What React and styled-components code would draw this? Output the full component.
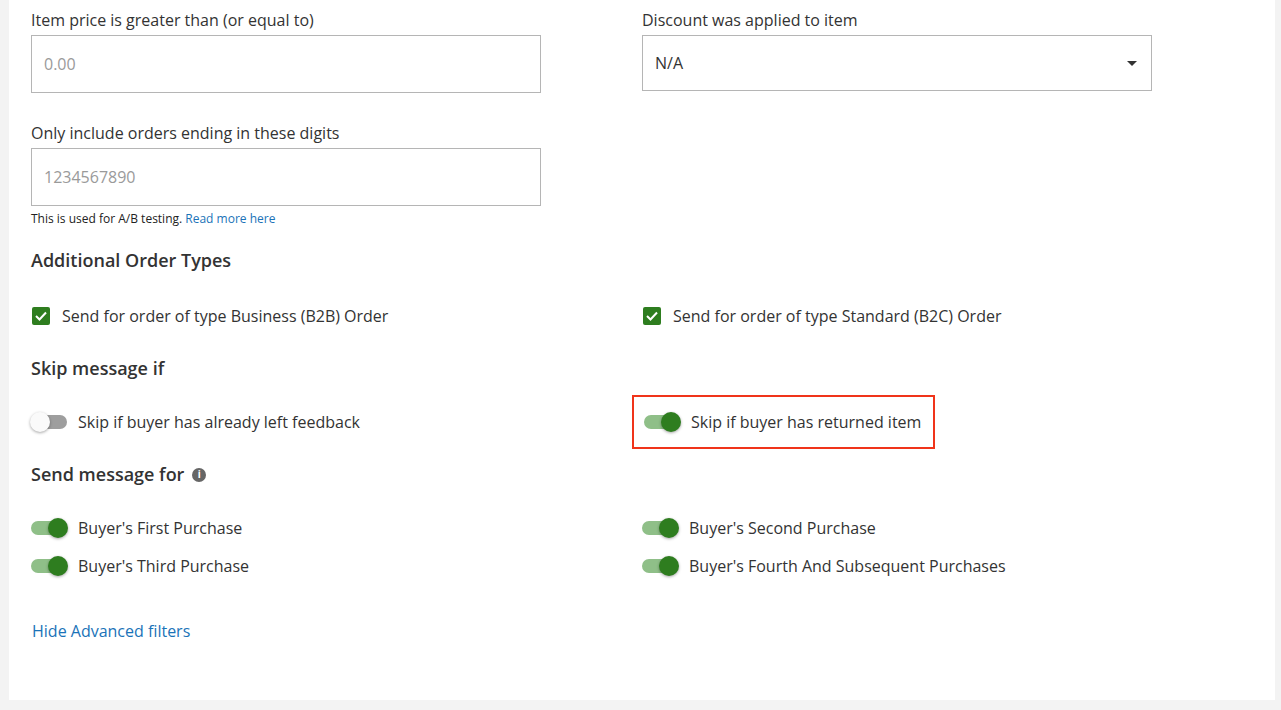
import React from "react";
import styled, { createGlobalStyle } from "styled-components";

const Global = createGlobalStyle`
  body { margin: 0; background: #f3f3f3; font-family: "Open Sans", "Noto Sans", sans-serif; color: #333; }
`;
const Panel = styled.div`
  margin: 0 6px 0 9px; background: #fff; height: 700px; box-sizing: border-box;
  padding: 8px 0 0 22px;
`;
const Grid = styled.div`
  display: grid; grid-template-columns: 611px 1fr;
`;
const Field = styled.div`display: flex; flex-direction: column;`;
const Label = styled.div`font-size: 16px; line-height: 22px; margin: 1px 0 4px;`;
const Input = styled.div`
  width: 510px; height: 58px; box-sizing: border-box; border: 1px solid #b5b5b5;
  display: flex; align-items: center; padding: 0 12px; font-size: 16px;
  color: ${p => (p.$ph ? "#9a9a9a" : "#333")}; justify-content: space-between;
`;
const Caret = styled.span`
  width: 0; height: 0; border-left: 5px solid transparent; border-right: 5px solid transparent;
  border-top: 5px solid #333; margin-right: 2px;
`;
const Help = styled.div`font-size: 12px; margin-top: 4px; color: #222;`;
const Link = styled.a`color: #1a73b8; text-decoration: none;`;
const Heading = styled.div`
  font-size: 18px; line-height: 23px; font-weight: 600; color: #333; margin: ${p => p.$m};
  display: flex; align-items: center; gap: 8px;
`;
const Info = styled.span`
  width: 14px; height: 14px; border-radius: 50%; background: #666; color: #fff;
  font-size: 10px; font-weight: 700; display: inline-flex; align-items: center; justify-content: center;
`;
const Row = styled.div`
  display: flex; align-items: center; gap: ${p => p.$gap || "12px"}; font-size: 16px; height: 24px;
`;
const Check = styled.span`
  width: 18px; height: 18px; background: #2e7d1f; border-radius: 2px;
  display: inline-flex; align-items: center; justify-content: center; margin-left: 1px;
`;
const Track = styled.span`
  position: relative; width: 36px; height: 14px; border-radius: 7px;
  background: ${p => (p.$on ? "#8fbf88" : "#9e9e9e")}; flex: none;
`;
const Knob = styled.span`
  position: absolute; top: -3px; ${p => (p.$on ? "right: -1px" : "left: -1px")};
  width: 20px; height: 20px; border-radius: 50%;
  background: ${p => (p.$on ? "#2e7d1f" : "#fafafa")};
  box-shadow: 0 1px 3px rgba(0,0,0,0.35);
`;
const Highlight = styled.div`
  margin-left: -10px; width: 303px; height: 54px; box-sizing: border-box;
  border: 2px solid #f0341a; display: flex; align-items: center; padding-left: 10px;
`;
const Toggle = ({ on, children }) => (
  <Row $gap="11px">
    <Track $on={on}><Knob $on={on} /></Track>
    <span>{children}</span>
  </Row>
);
const Checkbox = ({ children }) => (
  <Row>
    <Check>
      <svg width="12" height="10" viewBox="0 0 12 10"><path d="M1 5l3.5 3.5L11 1.5" stroke="#fff" strokeWidth="2" fill="none" /></svg>
    </Check>
    <span>{children}</span>
  </Row>
);
const ToggleGrid = styled(Grid)`row-gap: 14px;`;

export default function App() {
  return (
    <>
      <Global />
      <Panel>
        <Grid>
          <Field>
            <Label>Item price is greater than (or equal to)</Label>
            <Input $ph>0.00</Input>
          </Field>
          <Field>
            <Label>Discount was applied to item</Label>
            <Input style={{ height: 56 }}>N/A<Caret /></Input>
          </Field>
        </Grid>
        <Field style={{ marginTop: 28 }}>
          <Label>Only include orders ending in these digits</Label>
          <Input $ph>1234567890</Input>
          <Help>This is used for A/B testing. <Link href="#">Read more here</Link></Help>
        </Field>
        <Heading $m="22px 0 32px">Additional Order Types</Heading>
        <Grid>
          <Checkbox>Send for order of type Business (B2B) Order</Checkbox>
          <Checkbox>Send for order of type Standard (B2C) Order</Checkbox>
        </Grid>
        <Heading $m="29px 0 0">Skip message if</Heading>
        <Grid style={{ alignItems: "center", marginTop: 15 }}>
          <Toggle on={false}>Skip if buyer has already left feedback</Toggle>
          <Highlight><Toggle on>Skip if buyer has returned item</Toggle></Highlight>
        </Grid>
        <Heading $m="14px 0 30px">Send message for <Info>i</Info></Heading>
        <ToggleGrid>
          <Toggle on>Buyer's First Purchase</Toggle>
          <Toggle on>Buyer's Second Purchase</Toggle>
          <Toggle on>Buyer's Third Purchase</Toggle>
          <Toggle on>Buyer's Fourth And Subsequent Purchases</Toggle>
        </ToggleGrid>
        <Row style={{ marginTop: 41, marginLeft: 1 }}><Link href="#">Hide Advanced filters</Link></Row>
      </Panel>
    </>
  );
}
